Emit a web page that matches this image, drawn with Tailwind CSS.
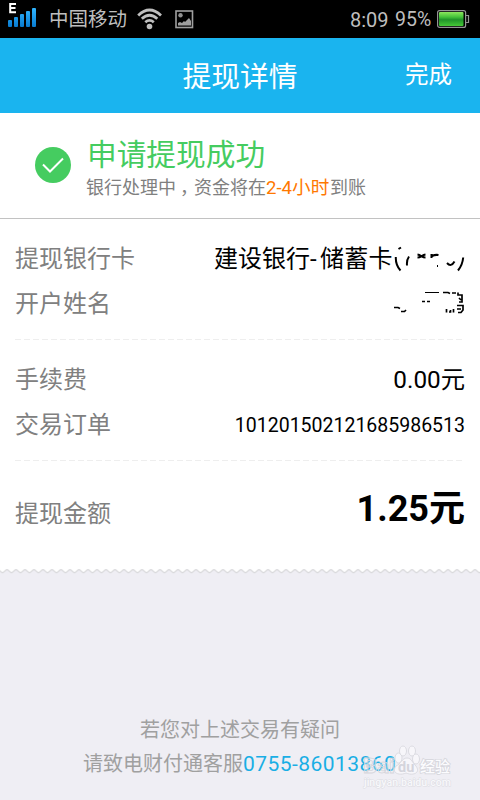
<!DOCTYPE html>
<html lang="zh-CN">
<head>
<meta charset="utf-8">
<title>提现详情</title>
<script src="https://cdn.jsdelivr.net/npm/@tailwindcss/browser@4"></script>
</head>
<body class="w-[480px] h-[800px] overflow-hidden bg-[#efeef4] font-['Roboto','Noto_Sans_CJK_SC',sans-serif] whitespace-nowrap">
<div class="relative flex flex-col w-[480px] h-[800px]">
  <div class="flex items-center h-[38px] bg-black text-[#bebebe] text-xl leading-[38px]">
    <svg class="ml-[7px] shrink-0" width="30" height="38" viewBox="0 0 30 38">
      <defs><linearGradient id="sig" x1="0" y1="8" x2="0" y2="27" gradientUnits="userSpaceOnUse"><stop stop-color="#30b5ff"/><stop offset="1" stop-color="#087bd0"/></linearGradient></defs>
      <path d="M9 4H3.200V12.200H9M3.200 8.100H8.500" fill="none" stroke="#fff" stroke-width="2"/>
      <g fill="url(#sig)"><rect x="1" y="20" width="4" height="7" rx="1"/><rect x="7" y="17" width="4" height="10" rx="1"/><rect x="13" y="14" width="4" height="13" rx="1"/><rect x="19" y="11" width="4" height="16" rx="1"/><rect x="25" y="8" width="4" height="19" rx="1"/></g>
    </svg>
    <span class="ml-[12px] w-[80px] pt-[2px] text-[19.500px]">中国移动</span>
    <svg class="ml-[8px] shrink-0" width="26" height="38" viewBox="0 0 26 38" fill="none" stroke="#bebebe" stroke-width="2.800">
      <path d="M1.200 15.500Q12.500 4.500 24 15.500M4.800 18.800Q12.500 11.700 20.300 18.800M8.300 22.300Q12.500 18.500 16.800 22.300"/><circle cx="12.500" cy="26.500" r="2.800" fill="#bebebe" stroke="none"/>
    </svg>
    <svg class="ml-[11px] shrink-0" width="20" height="38" viewBox="0 0 20 38">
      <rect x="2" y="11" width="16.500" height="16.500" fill="none" stroke="#a0a0a0" stroke-width="1.600"/><circle cx="6.500" cy="15.200" r="2.200" fill="#909090"/><path d="M4 25.500V23L6 22L8 23L10 21L11 22L15 18L17 21V25.500Z" fill="#a0a0a0"/>
    </svg>
    <span class="ml-auto pt-[2px] w-[45px] text-[20px]">8:09</span>
    <span class="pt-[2px] w-[41px] text-[19.500px]">95%</span>
    <svg class="mr-[10px] shrink-0" width="34" height="38" viewBox="0 0 34 38">
      <defs><linearGradient id="bat" x1="0" y1="0" x2="0" y2="1"><stop stop-color="#8ce65d"/><stop offset=".35" stop-color="#45c33a"/><stop offset=".55" stop-color="#20932a"/><stop offset="1" stop-color="#45c936"/></linearGradient></defs>
      <rect x="1.600" y="10.600" width="28" height="16.800" rx="2" fill="none" stroke="#959595" stroke-width="1.200"/><path d="M30 15.500H32.500V22.500H30" fill="none" stroke="#959595" stroke-width="1.200"/><rect x="3" y="12" width="24.500" height="14" rx="1" fill="url(#bat)"/>
    </svg>
  </div>
  <header class="grid grid-cols-[1fr_116px_1fr] items-center h-[75px] bg-[#1ab4ef] text-white">
    <span></span><h1 class="pt-[4px] text-[28.800px] leading-[71px] text-center">提现详情</h1><span class="text-right pr-[28px] text-[23.500px] pt-[1px]">完成</span>
  </header>
  <main class="h-[456px] bg-white">
    <section class="flex h-[106px] border-b border-[#c2c2c2] pl-[35px]">
      <svg class="mt-[34px] shrink-0" width="36" height="36" viewBox="0 0 36 36"><circle cx="18" cy="18" r="18" fill="#45cc60"/><path d="M8 17.500L15 24.500L28 11.500" fill="none" stroke="#fff" stroke-width="2"/></svg>
      <div class="ml-[16px] pt-[21px]">
        <h2 class="text-[29.700px] leading-[42px] text-[#45cc60]">申请提现成功</h2>
        <p class="-ml-px text-[18px] leading-6 text-[#808080]">银行处理中<span class="inline-block w-[18px] indent-[4px]">，</span>资金将在<span class="inline-block w-[64px] text-[18.600px] text-[#ff7800]">2-4小时</span>到账</p>
      </div>
    </section>
    <section class="mx-[15px] pt-[18px] h-[120px] text-2xl leading-[45px] text-[#808080]">
      <div class="flex justify-between h-[45px]"><span>提现银行卡</span>
        <span class="flex text-black"><span class="w-[178px]">建设银行<span class="inline-block w-[10px]">-</span><span class="tracking-[0.300px]">储蓄卡</span></span><svg class="-mt-px" width="73" height="45" viewBox="392 236 73 45" fill="none" stroke="#000" stroke-width="2"><path d="M398.500 249L401 247.500M395.800 257Q395.500 265 400.500 270.500M409 256.500Q406.500 260 407 265.500M417.500 254.500C421 255 422 257.500 425.500 257.500M417.500 257.500C421 257.500 422 255 425.500 254.500M431.500 258V254M432 256Q435 254.500 438.500 255M437 266H438M447 263Q451 267.500 454.500 261.500M463.200 257.500Q462.500 265 458 270.500"/></svg></span>
      </div>
      <div class="flex justify-between h-[45px]"><span>开户姓名</span>
        <svg class="-mt-px" width="73" height="45" viewBox="392 281 73 45" fill="none" stroke="#000" stroke-width="1.700"><path d="M394 307.500H398L400 308.500M401 311.500H404.500L406 310M422 301.500H425M427 301.500H430M443 292.500H448L450 293.500M452 293H456M458 292.500V295H462V302H459M459 298L461 300M457 305.500H463V310L461 312.500H458M457 309H461M446.500 309V312.500M449 312H450.500V310M453.500 309V312.500"/><path d="M425 292.500H439" stroke-width="1"/></svg>
      </div>
    </section>
    <svg class="block ml-[15px]" width="450" height="1"><path d="M0 .5H450" stroke="#eeeeee" stroke-dasharray="6 3"/></svg>
    <section class="mx-[15px] pt-[18px] h-[120px] text-2xl leading-[45px] text-[#808080]">
      <div class="flex justify-between h-[45px]"><span>手续费</span><span class="-mt-px text-black text-[24.300px]">0.00元</span></div>
      <div class="flex justify-between h-[45px]"><span>交易订单</span><span class="text-black text-[19.500px]">101201502121685986513</span></div>
    </section>
    <svg class="block ml-[15px]" width="450" height="1"><path d="M0 .5H450" stroke="#eeeeee" stroke-dasharray="6 3"/></svg>
    <section class="flex justify-between mx-[15px] h-[104px] text-2xl leading-[106px] text-[#808080]"><span>提现金额</span><strong class="text-black text-[36px] leading-[96px] font-bold">1.25元</strong></section>
  </main>
  <svg class="block shrink-0" width="480" height="6" viewBox="0 0 480 6">
    <defs><pattern id="tooth" x="2.500" width="9" height="6" patternUnits="userSpaceOnUse"><path d="M0 0H9V4L4.500 0L0 4Z" fill="#fff"/><path d="M0 4L4.500 .3L9 4" fill="none" stroke="#d9d9db" stroke-width="1.200"/></pattern></defs><rect width="480" height="6" fill="url(#tooth)"/>
  </svg>
  <footer class="pt-[138px] text-xl leading-[34px] text-[#a0a0a0]">
    <p class="pl-[140px]">若您对上述交易有疑问</p>
    <p class="pl-[83px]">请致电财付通客服<span class="text-[#1aaee5] text-[21px] tracking-[0.450px]">0755-86013860</span></p>
  </footer>
  <svg class="absolute left-[358px] top-[738px]" width="100" height="56" viewBox="358 738 100 56" font-family="Roboto, 'Noto Sans CJK SC', sans-serif" font-weight="700">
    <g fill="#fbfbfd" fill-opacity=".65" stroke="#d6d6dc" stroke-width=".8">
      <ellipse cx="398.500" cy="758" rx="3.500" ry="5"/><ellipse cx="403" cy="751" rx="3.500" ry="5"/><ellipse cx="412" cy="751" rx="3.500" ry="5"/><ellipse cx="416" cy="759" rx="3.500" ry="5"/><path d="M407 758C402 758 401 764 396 766C391 773 399 776 406 773C413 776 421 773 416 766C412 763 412 758 407 758Z"/>
      <text x="363" y="773" font-size="20" textLength="32" lengthAdjust="spacingAndGlyphs" fill-opacity=".3">Bai</text>
    </g>
    <text x="420" y="772" font-size="15" textLength="30" font-weight="500" fill="#fcfcfe" stroke="#d8d8de" stroke-width="1.800" paint-order="stroke">经验</text>
    <text x="398" y="772" font-size="14.500" fill="#d4d4dc">du</text>
    <text x="364" y="786" font-size="10.800" font-weight="500" fill="#f8f8fb" stroke="#dcdce2" stroke-width="1" paint-order="stroke" textLength="87" lengthAdjust="spacingAndGlyphs">jingyan.baidu.com</text>
  </svg>
</div>
</body>
</html>
